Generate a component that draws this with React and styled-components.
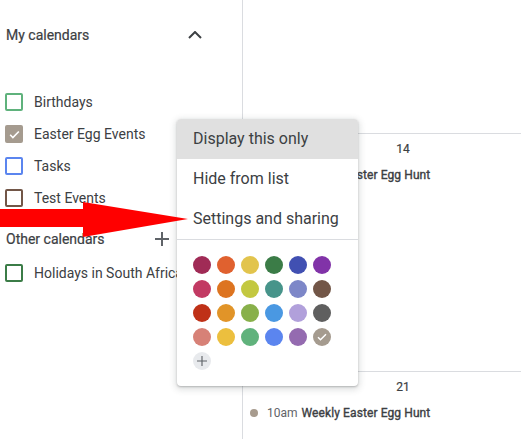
import React from "react";
import styled, { createGlobalStyle } from "styled-components";

const GlobalStyle = createGlobalStyle`
  html, body {
    margin: 0;
    padding: 0;
    background: #fff;
  }
  body {
    font-family: Roboto, "Liberation Sans", sans-serif;
    color: #3c4043;
  }
`;

const Page = styled.div`
  position: relative;
  display: flex;
  width: 521px;
  height: 439px;
  overflow: hidden;
`;

const Sidebar = styled.aside`
  width: 242px;
  flex-shrink: 0;
  border-right: 1px solid #dadce0;
  padding-top: 11px;
`;

const SectionHeader = styled.div`
  display: flex;
  align-items: center;
  justify-content: space-between;
  height: ${({ $height }) => $height}px;
  margin-top: ${({ $top }) => $top || 0}px;
  margin-bottom: ${({ $bottom }) => $bottom || 0}px;
  padding-left: 6px;
  padding-right: ${({ $iconRight }) => $iconRight}px;
  font-size: 14px;
  color: #3c4043;
  -webkit-text-stroke: 0.2px #3c4043;
`;

const IconButton = styled.span`
  width: 24px;
  height: 24px;
  display: flex;
  align-items: center;
  justify-content: center;
`;

const CalendarRow = styled.div`
  display: flex;
  align-items: center;
  gap: 11px;
  height: 32px;
  padding-left: 5px;
  font-size: 14px;
  color: #3c4043;
  white-space: nowrap;
`;

const Checkbox = styled.span`
  box-sizing: border-box;
  width: 18px;
  height: 18px;
  flex-shrink: 0;
  border: 2px solid ${({ $color }) => $color};
  border-radius: 2px;
  background: ${({ $checked, $color }) => ($checked ? $color : "transparent")};
  display: flex;
  align-items: center;
  justify-content: center;
`;

const Main = styled.main`
  flex: 1;
  overflow: hidden;
  display: flex;
  flex-direction: column;
`;

const WeekRow = styled.div`
  flex-shrink: 0;
  height: ${({ $height }) => $height}px;
  border-bottom: ${({ $last }) => ($last ? "none" : "1px solid #dadce0")};
`;

const DayCell = styled.div`
  width: 320px;
  padding-top: 5px;
`;

const DayNumber = styled.div`
  text-align: center;
  font-size: 12px;
  line-height: 20px;
  color: #3c4043;
  -webkit-text-stroke: 0.2px #3c4043;
`;

const EventRow = styled.div`
  display: flex;
  align-items: center;
  height: 20px;
  margin-top: 6px;
  padding-left: 7px;
  font-size: 12px;
  white-space: nowrap;
  color: #3c4043;
`;

const EventDot = styled.span`
  width: 8px;
  height: 8px;
  border-radius: 50%;
  background: #a79b8e;
  margin-right: 9px;
`;

const EventTime = styled.span`
  margin-right: 4px;
  color: #5f6368;
`;

const EventTitle = styled.span`
  -webkit-text-stroke: 0.35px #3c4043;
  letter-spacing: 0.1px;
`;

const Menu = styled.div`
  position: absolute;
  left: 177px;
  top: 119px;
  width: 181px;
  padding-bottom: 16px;
  background: #fff;
  border-radius: 4px;
  overflow: hidden;
  box-shadow: 0 2px 6px 2px rgba(60, 64, 67, 0.15),
    0 1px 2px 0 rgba(60, 64, 67, 0.3);
`;

const MenuItem = styled.div`
  height: 40px;
  box-sizing: border-box;
  padding: 0 0 2px 16px;
  display: flex;
  align-items: center;
  font-size: 16px;
  color: #3c4043;
  background: ${({ $active }) => ($active ? "#e0e0e0" : "transparent")};
`;

const Divider = styled.div`
  height: 1px;
  background: #dadce0;
  margin-bottom: 16px;
`;

const Swatches = styled.div`
  display: grid;
  grid-template-columns: repeat(6, 18px);
  gap: 6px;
  padding-left: 16px;
`;

const Swatch = styled.span`
  width: 18px;
  height: 18px;
  border-radius: 50%;
  background: ${({ $color }) => $color};
  display: flex;
  align-items: center;
  justify-content: center;
`;

const Arrow = styled.svg`
  position: absolute;
  left: 0;
  top: 200px;
`;

const calendars = [
  { name: "Birthdays", color: "#5fb27c" },
  { name: "Easter Egg Events", color: "#a59b8f", checked: true },
  { name: "Tasks", color: "#5b85ef" },
  { name: "Test Events", color: "#725647" },
];

const palette = [
  "#a02b56", "#e0612f", "#e2c44d", "#3b7c47", "#4150b2", "#8133a8",
  "#c23a63", "#dd7420", "#c3c840", "#47948a", "#7d87c8", "#725647",
  "#bf3117", "#e19428", "#88b04a", "#4a98e2", "#b1a0db", "#5f5f5f",
  "#d78177", "#ecbf3e", "#60b27c", "#5b85ef", "#946bb0", "#a59b8f",
];

const Check = ({ size = 12 }) => (
  <svg width={size} height={size} viewBox="0 0 24 24">
    <path d="M4 12.5l5 5L20 6.5" fill="none" stroke="#fff" strokeWidth="3" />
  </svg>
);

const Plus = ({ size, stroke, width }) => (
  <svg width={size} height={size} viewBox="0 0 14 14">
    <path d="M7 0v14M0 7h14" stroke={stroke} strokeWidth={width} />
  </svg>
);

const Event = () => (
  <EventRow>
    <EventDot />
    <EventTime>10am</EventTime>
    <EventTitle>Weekly Easter Egg Hunt</EventTitle>
  </EventRow>
);

const App = () => (
  <Page>
    <GlobalStyle />
    <Sidebar>
      <SectionHeader $height={48} $bottom={27} $iconRight={35}>
        My calendars
        <IconButton>
          <svg width="14" height="8" viewBox="0 0 14 8">
            <path d="M1 7l6-6 6 6" fill="none" stroke="#3c4043" strokeWidth="2" />
          </svg>
        </IconButton>
      </SectionHeader>
      {calendars.map((c) => (
        <CalendarRow key={c.name}>
          <Checkbox $color={c.color} $checked={c.checked}>
            {c.checked && <Check size={13} />}
          </Checkbox>
          {c.name}
        </CalendarRow>
      ))}
      <SectionHeader $height={36} $top={7} $iconRight={68}>
        Other calendars
        <IconButton>
          <Plus size={14} stroke="#5f6368" width={2} />
        </IconButton>
      </SectionHeader>
      <CalendarRow>
        <Checkbox $color="#3b7c47" />
        Holidays in South Africa
      </CalendarRow>
    </Sidebar>

    <Main>
      <WeekRow $height={133} />
      <WeekRow $height={237}>
        <DayCell>
          <DayNumber>14</DayNumber>
          <Event />
        </DayCell>
      </WeekRow>
      <WeekRow $height={67} $last>
        <DayCell>
          <DayNumber>21</DayNumber>
          <Event />
        </DayCell>
      </WeekRow>
    </Main>

    <Menu>
      <MenuItem $active>Display this only</MenuItem>
      <MenuItem>Hide from list</MenuItem>
      <MenuItem>Settings and sharing</MenuItem>
      <Divider />
      <Swatches>
        {palette.map((color, i) => (
          <Swatch key={color + i} $color={color}>
            {i === palette.length - 1 && <Check size={12} />}
          </Swatch>
        ))}
        <Swatch $color="#e8eaed">
          <Plus size={10} stroke="#5f6368" width={1.6} />
        </Swatch>
      </Swatches>
    </Menu>

    <Arrow width="190" height="40" viewBox="0 0 190 40">
      <polygon points="0,9 83,9 83,2 188,19 83,37 83,27 0,27" fill="#ff0000" />
    </Arrow>
  </Page>
);

export default App;
